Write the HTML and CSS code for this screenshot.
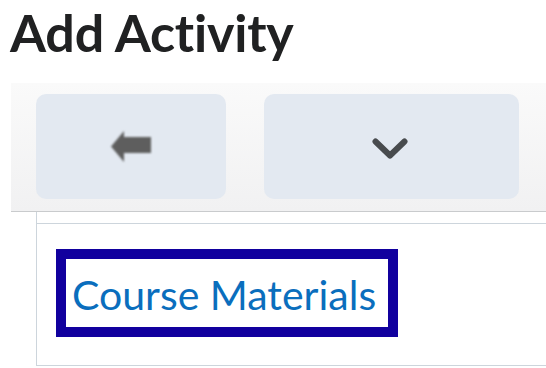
FILE: index.html
```html
<!DOCTYPE html>
<html lang="en">
<head>
<meta charset="utf-8">
<title>Add Activity</title>
<link rel="stylesheet" href="styles.css">
</head>
<body>
<h1 class="title">Add Activity</h1>
<div class="toolbar">
  <button class="btn btn-back" type="button" aria-label="Back">
    <svg class="icon-arrow" width="40" height="31" viewBox="0 0 40 31"><polygon points="0,15.5 13,0 13,6 40,6 40,22 13,22 13,31" fill="#5e5e5e"/></svg>
  </button>
  <button class="btn btn-menu" type="button" aria-label="More">
    <svg class="icon-chevron" width="36" height="22" viewBox="0 0 36 22"><polyline points="3.5,3.5 18,17.5 32.5,3.5" fill="none" stroke="#484b4e" stroke-width="6" stroke-linecap="round" stroke-linejoin="round"/></svg>
  </button>
</div>
<div class="frame">
  <div class="frame-inner">
    <a class="link-box" href="#">Course Materials</a>
  </div>
</div>
</body>
</html>
```

FILE: styles.css
```css
html, body {
  margin: 0;
  padding: 0;
  background: #ffffff;
  font-family: Lato, "Noto Sans", sans-serif;
  overflow: hidden;
}

.title {
  margin: 0 0 19px 0;
  padding-left: 10px;
  font-size: 52px;
  line-height: 64px;
  font-weight: 700;
  color: #202122;
  letter-spacing: -0.2px;
}

.toolbar {
  margin-left: 11px;
  height: 129px;
  box-sizing: border-box;
  padding: 11px 0 0 25px;
  display: flex;
  gap: 38px;
  background: linear-gradient(#fafafa, #f1f1f2);
  border-bottom: 1px solid #c9cbcd;
}

.btn {
  height: 105px;
  border: 0;
  border-radius: 10px;
  background: #e3e9f1;
  display: flex;
  align-items: center;
  justify-content: center;
  padding: 0;
}

.btn-back {
  width: 190px;
}

.btn-menu {
  width: 255px;
  padding-top: 5px;
  padding-right: 3px;
  box-sizing: border-box;
}

.icon-arrow {
  filter: blur(0.9px);
}

.frame {
  margin-left: 36px;
  height: 154px;
  box-sizing: border-box;
  border-left: 1.5px solid #cdd5dc;
  border-bottom: 1.5px solid #cdd5dc;
  padding-top: 11px;
}

.frame-inner {
  border-top: 1.5px solid #cdd5dc;
  padding: 25px 0 0 19px;
}

.link-box {
  display: inline-block;
  box-sizing: border-box;
  width: 342px;
  height: 88px;
  border: 10px solid #11009e;
  padding: 3px 0 0 6px;
  line-height: 65px;
  font-size: 41px;
  color: #0a6ebd;
  text-decoration: none;
  font-weight: 400;
  white-space: nowrap;
}
```
